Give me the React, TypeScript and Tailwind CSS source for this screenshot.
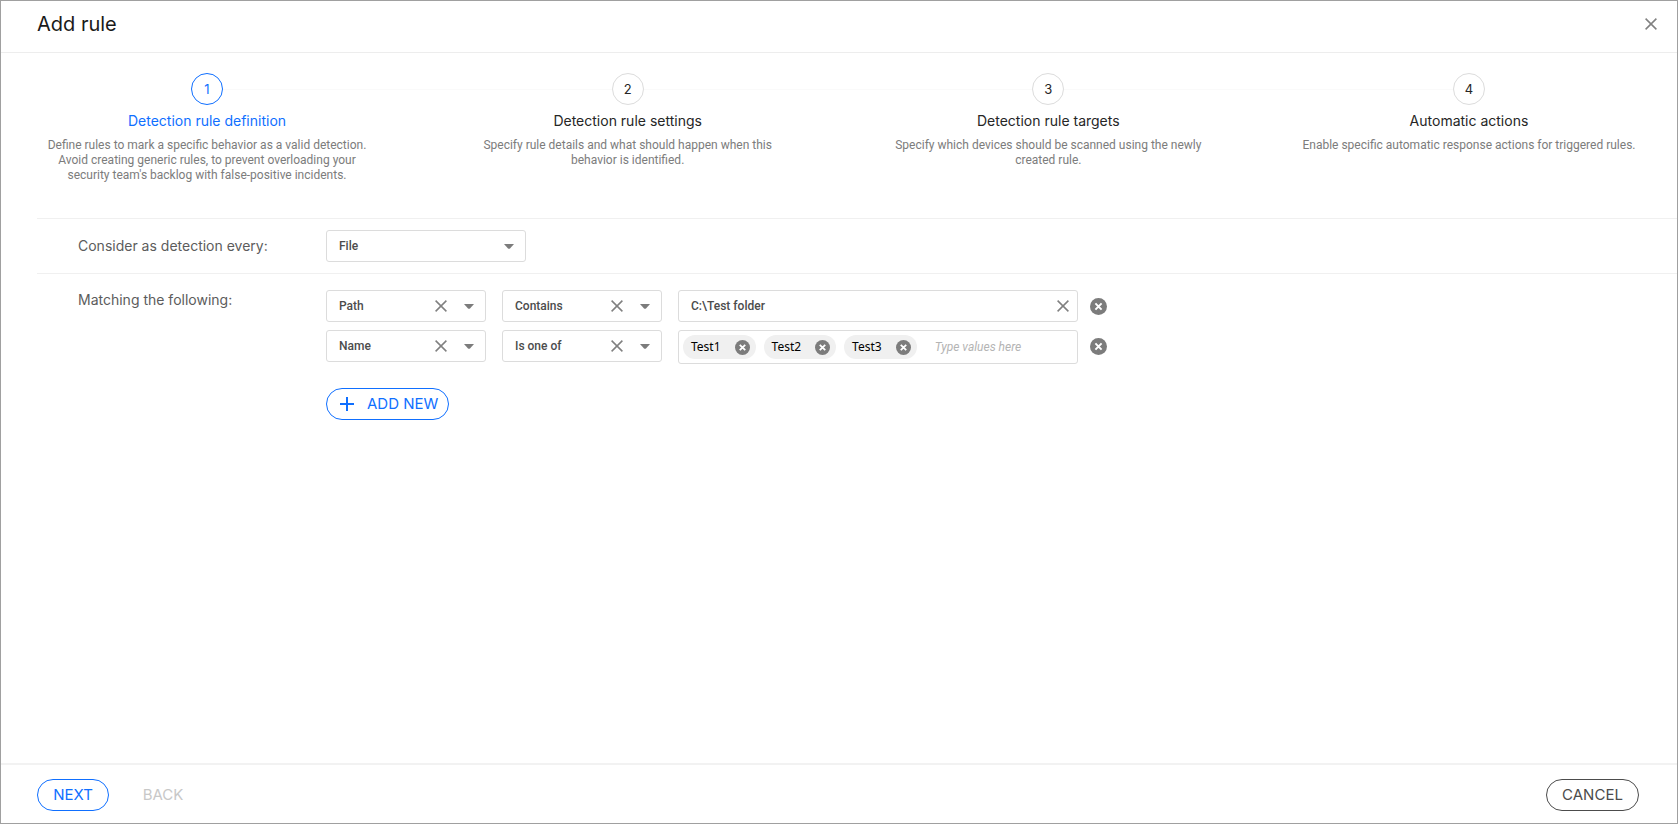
import { useState } from "react";

const steps = [
  {
    title: "Detection rule definition",
    text: "Define rules to mark a specific behavior as a valid detection. Avoid creating generic rules, to prevent overloading your security team's backlog with false-positive incidents.",
  },
  {
    title: "Detection rule settings",
    text: "Specify rule details and what should happen when this behavior is identified.",
  },
  {
    title: "Detection rule targets",
    text: "Specify which devices should be scanned using the newly created rule.",
  },
  {
    title: "Automatic actions",
    text: "Enable specific automatic response actions for triggered rules.",
  },
];

function Cross() {
  return (
    <svg width="12" height="12" viewBox="0 0 12 12" fill="none" stroke="#808080" strokeWidth="1.5" aria-hidden="true">
      <path d="M0.6 0.6 11.4 11.4M11.4 0.6 0.6 11.4" />
    </svg>
  );
}

function RoundCross({ size }: { size: number }) {
  return (
    <svg width={size} height={size} viewBox="0 0 17 17" fill="none" aria-hidden="true">
      <circle cx="8.5" cy="8.5" r="8.5" fill="#7c7c7c" />
      <path d="M5.4 5.4 11.6 11.6M11.6 5.4 5.4 11.6" stroke="#fff" strokeWidth="2" />
    </svg>
  );
}

function Picker({
  id,
  label,
  options,
  clearable = false,
  width,
}: {
  id: string;
  label?: string;
  options: string[];
  clearable?: boolean;
  width: string;
}) {
  return (
    <div className={`relative ${width}`}>
      <select
        id={id}
        aria-label={label}
        className="block h-8 w-full appearance-none rounded-[3px] border border-[#dcdcdc] bg-white px-3 text-xs font-medium text-[#4c4c4c]"
      >
        {options.map((o) => (
          <option key={o}>{o}</option>
        ))}
      </select>
      {clearable && (
        <button type="button" aria-label={`Clear ${label}`} className="absolute top-[10px] right-[39px]">
          <Cross />
        </button>
      )}
      <svg
        className="pointer-events-none absolute top-[14px] right-3"
        width="10"
        height="5"
        viewBox="0 0 10 5"
        aria-hidden="true"
      >
        <path d="M0 0H10L6 4.4Q5 5.2 4 4.4Z" fill="#7c7c7c" />
      </svg>
    </div>
  );
}

export default function App() {
  const [path, setPath] = useState("C:\\Test folder");
  const [tags, setTags] = useState(["Test1", "Test2", "Test3"]);

  return (
    <div className="flex min-h-screen flex-col border border-[#a0a0a0] bg-white font-['Roboto',sans-serif]">
      <header className="flex h-[52px] items-center justify-between border-b border-[#ededed] pr-5 pb-1.5 pl-9">
        <h1 className="font-['Inter',sans-serif] text-xl leading-6 text-[#1a1a1a]">Add rule</h1>
        <button type="button" aria-label="Close">
          <Cross />
        </button>
      </header>

      <main className="grow">
        <ol className="relative flex h-[165px] justify-between pt-5 pr-10 pl-[38px]">
          <li className="absolute top-9 right-[208px] left-[206px] h-px bg-[#fafafa]" role="presentation" />
          {steps.map((s, i) => (
            <li key={s.title} className="relative flex w-[336px] flex-col items-center text-center">
              <span
                className={`flex size-8 items-center justify-center rounded-full border bg-white pt-0.5 font-['Inter',sans-serif] text-[13px] ${
                  i === 0 ? "border-[#0f6fff] text-[#0f6fff]" : "border-[#dcdcdc] text-[#262626]"
                }`}
              >
                {i + 1}
              </span>
              <h2
                className={`mt-1.5 font-['Inter',sans-serif] text-sm leading-5 ${
                  i === 0 ? "text-[#0f6fff]" : "text-[#262626]"
                }`}
              >
                {s.title}
              </h2>
              <p className="mt-[7px] text-xs leading-[15px] text-[#7c7c7c]">{s.text}</p>
            </li>
          ))}
        </ol>

        <div className="ml-9">
          <div className="flex h-[55px] items-center border-t border-[#f0f0f0] pl-[41px]">
            <label htmlFor="subject" className="w-[248px] font-['Inter',sans-serif] text-sm text-[#5c5c5c]">
              Consider as detection every:
            </label>
            <Picker id="subject" options={["File", "Process", "Registry"]} width="w-[200px]" />
          </div>

          <div className="flex border-t border-[#f0f0f0] pt-4 pl-[41px]">
            <span className="w-[248px] font-['Inter',sans-serif] text-sm text-[#5c5c5c]">Matching the following:</span>
            <div className="flex flex-col items-start gap-2">
              <div className="flex items-start gap-4">
                <Picker id="field-1" label="Field" options={["Path", "Name"]} clearable width="w-[160px]" />
                <Picker id="operator-1" label="Operator" options={["Contains", "Is one of"]} clearable width="w-[160px]" />
                <div className="relative w-[400px]">
                  <input
                    type="text"
                    aria-label="Path value"
                    value={path}
                    onChange={(e) => setPath(e.target.value)}
                    className="block h-8 w-full rounded-[3px] border border-[#dcdcdc] pr-8 pl-3 text-xs font-medium text-[#4c4c4c]"
                  />
                  <button
                    type="button"
                    aria-label="Clear value"
                    onClick={() => setPath("")}
                    className="absolute top-[10px] right-[9px]"
                  >
                    <Cross />
                  </button>
                </div>
                <button type="button" aria-label="Remove condition" className="-ml-1 flex h-8 items-center">
                  <RoundCross size={17} />
                </button>
              </div>

              <div className="flex items-start gap-4">
                <Picker id="field-2" label="Field" options={["Name", "Path"]} clearable width="w-[160px]" />
                <Picker id="operator-2" label="Operator" options={["Is one of", "Contains"]} clearable width="w-[160px]" />
                <div className="flex h-[34px] w-[400px] items-center gap-2 rounded-[3px] border border-[#dcdcdc] px-1">
                  {tags.map((t) => (
                    <span
                      key={t}
                      className="flex h-6 shrink-0 items-center gap-[14px] rounded-full bg-[#f0f0f0] pr-1.5 pl-2 font-['Noto_Sans',sans-serif] text-xs text-black"
                    >
                      {t}
                      <button type="button" aria-label={`Remove ${t}`} onClick={() => setTags(tags.filter((x) => x !== t))}>
                        <RoundCross size={15} />
                      </button>
                    </span>
                  ))}
                  <input
                    type="text"
                    aria-label="Name values"
                    placeholder="Type values here"
                    className="w-0 grow pl-[10px] text-xs italic placeholder:text-[#b4b4b4]"
                  />
                </div>
                <button type="button" aria-label="Remove condition" className="-ml-1 flex h-8 items-center">
                  <RoundCross size={17} />
                </button>
              </div>

              <button
                type="button"
                className="mt-4 flex h-8 w-[123px] items-center gap-3 rounded-full border border-[#0f6fff] pl-3 font-['Inter',sans-serif] text-[15px] text-[#0f6fff]"
              >
                <svg width="16" height="16" viewBox="0 0 16 16" stroke="currentColor" strokeWidth="2" aria-hidden="true">
                  <path d="M8 1V15M1 8H15" />
                </svg>
                ADD NEW
              </button>
            </div>
          </div>
        </div>
      </main>

      <footer className="flex h-[60px] items-center justify-between border-t-2 border-[#f2f2f2] pt-0.5 pr-[38px] pl-9 font-['Inter',sans-serif] text-[15px]">
        <div className="flex items-center gap-4">
          <button type="button" className="h-8 w-[72px] rounded-full border border-[#0f6fff] text-[#0f6fff]">
            NEXT
          </button>
          <button type="button" disabled className="h-8 w-[76px] text-[#c8c8c8]">
            BACK
          </button>
        </div>
        <button type="button" className="h-8 w-[93px] rounded-full border border-[#4c4c4c] text-[#4c4c4c]">
          CANCEL
        </button>
      </footer>
    </div>
  );
}
